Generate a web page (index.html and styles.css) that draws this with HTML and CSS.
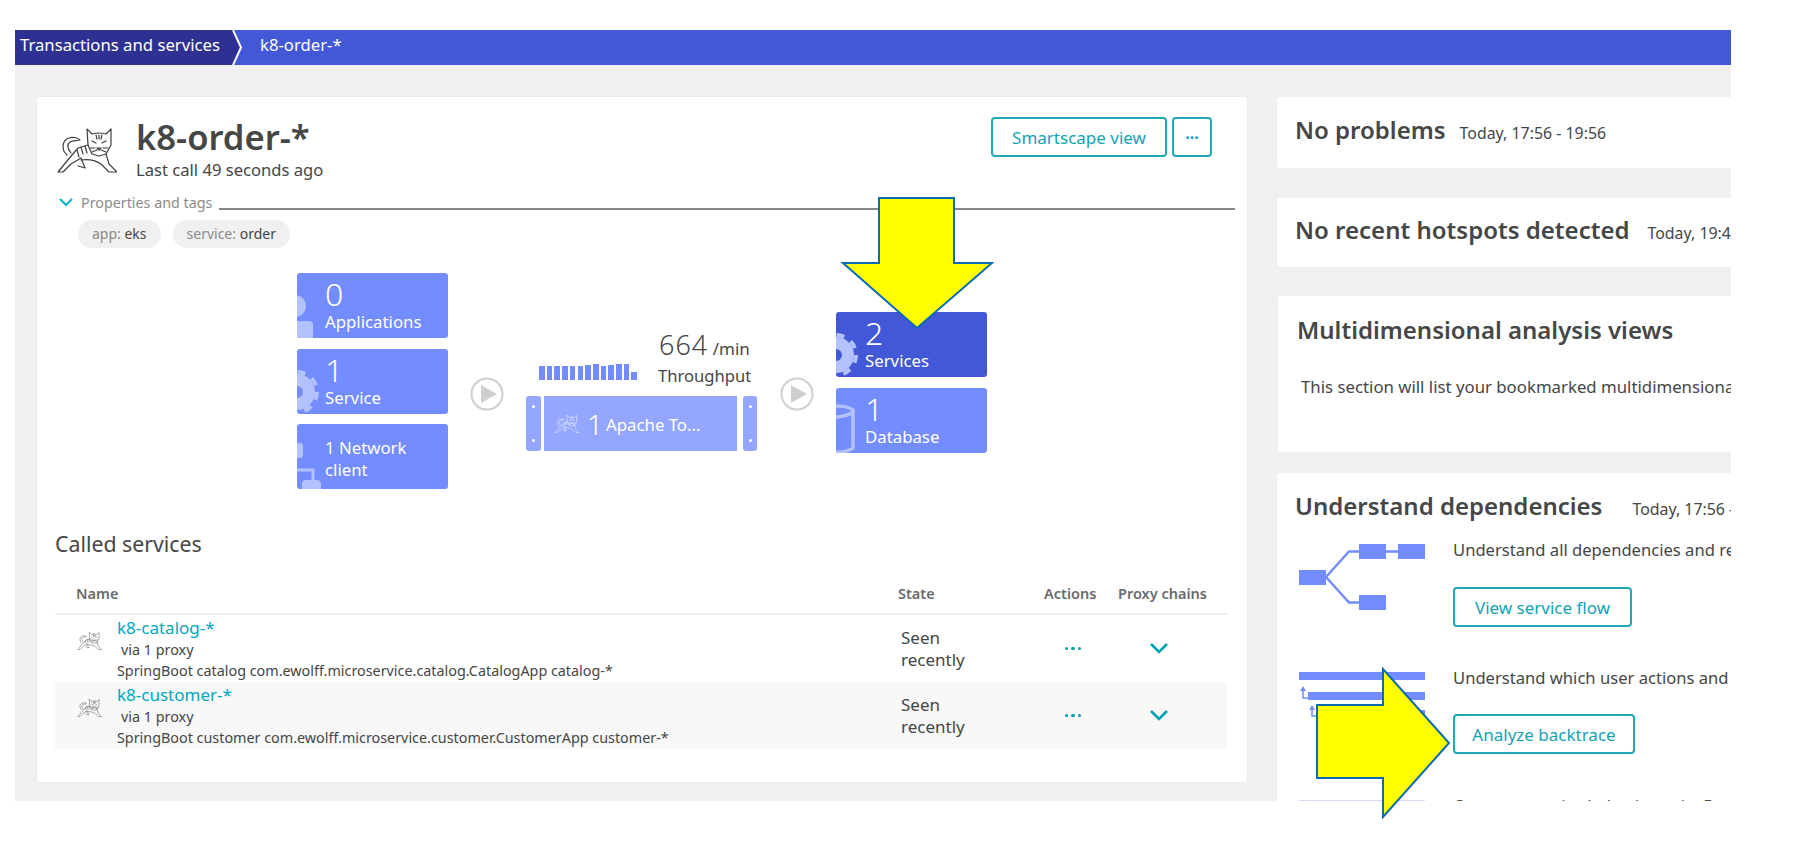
FILE: index.html
```html
<!DOCTYPE html>
<html lang="en">
<head>
<meta charset="utf-8">
<title>k8-order-*</title>
<link rel="stylesheet" href="styles.css">
</head>
<body>
<svg class="defs" width="0" height="0" aria-hidden="true">
  <symbol id="tomcat" viewBox="0 0 60 45">
    <g fill="none" stroke="currentColor" stroke-width="1.2" stroke-linejoin="round" stroke-linecap="round">
      <path d="M30 1L35 6Q42 4 49 6L54 1L54 17L49 26L42 28L35 26L31 17Z"/>
      <path d="M35 13l4 2M49 13l-4 2M40 20h4l-2 2zM42 7v4M39 7l1 4M45 7l-1 4M33 20h5M46 20h5M35 24l5-2M49 24l-5-2"/>
      <path d="M10 27C4 22 5 12 12 10C15 9 21 9 23 12C20 13 16 12 13 14C10 16 10 20 14 25"/>
      <path d="M31 17L21 20L10 33L1 44L6 44L14 36L24 30L28 40L21 38"/>
      <path d="M24 32C31 31 38 32 44 36L52 44L60 44L52 36L49 26"/>
      <path d="M24 19L26 26M28 18L30 25M20 22L22 29"/>
    </g>
  </symbol>
  <symbol id="play" viewBox="0 0 34 34">
    <circle cx="17" cy="17" r="15.5" fill="#fff" stroke="#cfcfcf" stroke-width="2"/>
    <path d="M11 8L27 17L11 26Z" fill="#cfcfcf"/>
  </symbol>
</svg>
<div class="page">
  <div class="shot">
    <nav class="crumbs">
      <span class="crumb-root">Transactions and services</span>
      <svg class="crumb-sep" width="12" height="35" viewBox="0 0 12 35"><path d="M0 0H1L9 17.5L1 35H0Z" fill="#2e3192"/><path d="M1 0L9 17.5L1 35" fill="none" stroke="#fff" stroke-width="2"/></svg>
      <span class="crumb-current">k8-order-*</span>
    </nav>
    <div class="main">
      <section class="card-main">
        <header class="head">
          <svg class="head-icon"><use href="#tomcat"/></svg>
          <div class="head-text">
            <h1>k8-order-*</h1>
            <p>Last call 49 seconds ago</p>
          </div>
          <div class="head-actions">
            <button class="btn btn-smart">Smartscape view</button>
            <button class="btn btn-more">···</button>
          </div>
        </header>
        <div class="props">
          <svg class="props-chevron" width="14" height="9" viewBox="0 0 14 9"><path d="M1 1L7 7L13 1" fill="none" stroke="#00b4cc" stroke-width="2"/></svg>
          <span class="props-label">Properties and tags</span>
          <span class="props-line"></span>
        </div>
        <div class="tags">
          <span class="tag"><i>app:</i> eks</span>
          <span class="tag"><i>service:</i> order</span>
        </div>
        <div class="flow">
          <div class="tile-col">
            <div class="tile">
              <svg class="tile-icon" viewBox="0 0 28 65"><circle cx="-2" cy="33" r="11"/><rect x="-6" y="48" width="22" height="20" rx="4"/></svg>
              <div class="tile-text"><b>0</b><span>Applications</span></div>
            </div>
            <div class="tile">
              <svg class="tile-icon" viewBox="0 0 28 65"><circle class="gear-ring" cx="0" cy="43" r="12"/><circle class="gear-teeth" cx="0" cy="43" r="20"/></svg>
              <div class="tile-text"><b>1</b><span>Service</span></div>
            </div>
            <div class="tile">
              <svg class="tile-icon" viewBox="0 0 28 65"><rect x="-6" y="19" width="12" height="15" rx="3"/><path class="net-line" d="M0 46H16V58"/><rect x="5" y="56" width="19" height="14" rx="4"/></svg>
              <div class="tile-text tile-two"><span>1 Network</span><span>client</span></div>
            </div>
          </div>
          <svg class="play"><use href="#play"/></svg>
          <div class="center">
            <div class="metric">
              <div class="bars">
                <i style="height:14px"></i><i style="height:14px"></i><i style="height:14px"></i><i style="height:14px"></i><i style="height:14px"></i><i style="height:14px"></i><i style="height:15px"></i><i style="height:16px"></i><i style="height:14px"></i><i style="height:15px"></i><i style="height:16px"></i><i style="height:16px"></i><i style="height:8px"></i>
              </div>
              <div class="metric-text">
                <div class="metric-value"><b>664</b> /min</div>
                <div class="metric-label">Throughput</div>
              </div>
            </div>
            <div class="proc">
              <div class="proc-cap"><i></i><i></i></div>
              <div class="proc-body">
                <svg class="proc-icon"><use href="#tomcat"/></svg>
                <b>1</b><span>Apache To...</span>
              </div>
              <div class="proc-cap"><i></i><i></i></div>
            </div>
          </div>
          <svg class="play play-b"><use href="#play"/></svg>
          <div class="tile-col tile-col-b">
            <div class="tile tile-dark">
              <svg class="tile-icon" viewBox="0 0 28 65"><circle class="gear-ring" cx="0" cy="43" r="12"/><circle class="gear-teeth" cx="0" cy="43" r="20"/></svg>
              <div class="tile-text"><b>2</b><span>Services</span></div>
            </div>
            <div class="tile">
              <svg class="tile-icon" viewBox="0 0 28 65"><path class="db-line" d="M-12 21C-2 17 10 17 17 22V60C10 65 -2 65 -12 64M-12 28C-2 30 10 29 17 24"/></svg>
              <div class="tile-text"><b>1</b><span>Database</span></div>
            </div>
          </div>
        </div>
        <h2 class="called">Called services</h2>
        <div class="table">
          <div class="row-head">
            <span class="c-name">Name</span>
            <span class="c-state">State</span>
            <span class="c-actions">Actions</span>
            <span class="c-proxy">Proxy chains</span>
          </div>
          <div class="row-item">
            <svg class="row-icon"><use href="#tomcat"/></svg>
            <div class="row-text">
              <a class="link">k8-catalog-*</a>
              <span class="via">via 1 proxy</span>
              <span>SpringBoot catalog com.ewolff.microservice.catalog.CatalogApp catalog-*</span>
            </div>
            <div class="state">Seen<br>recently</div>
            <div class="dots"><i></i><i></i><i></i></div>
            <svg class="row-chevron" width="18" height="11" viewBox="0 0 18 11"><path d="M1 1L9 9L17 1" fill="none" stroke="#00a1b2" stroke-width="2.6"/></svg>
          </div>
          <div class="row-item row-alt">
            <svg class="row-icon"><use href="#tomcat"/></svg>
            <div class="row-text">
              <a class="link">k8-customer-*</a>
              <span class="via">via 1 proxy</span>
              <span>SpringBoot customer com.ewolff.microservice.customer.CustomerApp customer-*</span>
            </div>
            <div class="state">Seen<br>recently</div>
            <div class="dots"><i></i><i></i><i></i></div>
            <svg class="row-chevron" width="18" height="11" viewBox="0 0 18 11"><path d="M1 1L9 9L17 1" fill="none" stroke="#00a1b2" stroke-width="2.6"/></svg>
          </div>
        </div>
      </section>
      <aside class="side">
        <section class="panel panel-a">
          <h3>No problems</h3><span class="when">Today, 17:56 - 19:56</span>
        </section>
        <section class="panel panel-b">
          <h3>No recent hotspots detected</h3><span class="when when-wide">Today, 19:41 - 19:56</span>
        </section>
        <section class="panel panel-c">
          <h3>Multidimensional analysis views</h3>
          <p>This section will list your bookmarked multidimensional analysis views.</p>
        </section>
        <section class="panel panel-d">
          <div class="panel-title"><h3>Understand dependencies</h3><span class="when when-dep">Today, 17:56 - 19:56</span></div>
          <div class="dep">
            <svg class="dep-img" width="126" height="66" viewBox="0 0 126 66">
              <g fill="#738cff"><rect x="0" y="26" width="27" height="15"/><rect x="60" y="0" width="27" height="15"/><rect x="99" y="0" width="27" height="15"/><rect x="60" y="51" width="27" height="15"/></g>
              <path d="M27 33L50 7.500H99M27 33L50 58.500H60" fill="none" stroke="#738cff" stroke-width="2.500"/>
            </svg>
            <div class="dep-body">
              <p>Understand all dependencies and requests of this service</p>
              <button class="btn btn-flow">View service flow</button>
            </div>
          </div>
          <div class="dep">
            <svg class="dep-img" width="126" height="48" viewBox="0 0 126 48">
              <g fill="#738cff"><rect x="0" y="0" width="126" height="8"/><rect x="9" y="20" width="117" height="8"/><rect x="18" y="38" width="108" height="8"/></g>
              <path d="M4 17V26H9M13 36V44H18" fill="none" stroke="#738cff" stroke-width="1.500"/>
              <path d="M1 19L4 14L7 19ZM10 38L13 33L16 38Z" fill="#738cff"/>
            </svg>
            <div class="dep-body">
              <p>Understand which user actions and services call this service</p>
              <button class="btn btn-back">Analyze backtrace</button>
            </div>
          </div>
          <div class="dep">
            <svg class="dep-img" width="126" height="6" viewBox="0 0 126 6"><rect width="126" height="6" fill="#d5dcff"/></svg>
            <div class="dep-body"><p>Compare service behavior to its DevOps baseline</p></div>
          </div>
        </section>
      </aside>
    </div>
  </div>
  <svg class="arrow arrow-down" width="154" height="134" viewBox="0 0 154 134">
    <path d="M39 1H114V66H152L77 131L3 66H39Z" fill="#ffff00" stroke="#0a6ab4" stroke-width="2"/>
  </svg>
  <svg class="arrow arrow-right" width="136" height="152" viewBox="0 0 136 152">
    <path d="M2 38H68V2L134 76L68 150V111H2Z" fill="#ffff00" stroke="#0a6ab4" stroke-width="2"/>
  </svg>
</div>
</body>
</html>
```

FILE: styles.css
```css
* { box-sizing: border-box; }
html, body { margin: 0; padding: 0; background: #fff; overflow: hidden; }
body { font-family: "Noto Sans", "Open Sans", sans-serif; color: #454646; font-size: 14px; }
h1, h2, h3, p { margin: 0; }
.defs { position: absolute; }

.page { position: relative; width: 1799px; height: 852px; padding: 30px 0 0 15px; }
.shot { width: 1716px; height: 771px; overflow: hidden; background: #f0f0f0; }

.crumbs { height: 35px; background: #4358d6; display: flex; color: #fff; font-size: 16.700px; line-height: 29px; }
.crumb-root { width: 217px; padding-left: 5px; background: #2e3192; white-space: nowrap; }
.crumb-sep { flex: none; }
.crumb-current { margin-left: 16px; }

.main { display: flex; gap: 30px; padding: 32px 0 0 22px; }
.card-main { flex: none; width: 1210px; height: 685px; background: #fff; border-radius: 3px; box-shadow: 0 0 2px rgba(0,0,0,.08); padding: 20px 20px 0 18px; }

.head { display: flex; align-items: flex-start; }
.head-icon { width: 60px; height: 45px; margin: 11px 19px 0 2px; color: #3f3f3f; flex: none; }
.head-text { flex: 1; }
.head-text h1 { font-size: 34.600px; font-weight: 600; line-height: 40px; color: #454646; margin-top: 0; }
.head-text p { font-size: 16.600px; line-height: 22px; color: #454646; margin-top: 2px; }
.head-actions { display: flex; gap: 5px; margin-right: 15px; }

.btn { height: 40px; border: 2px solid #1fa8b6; border-radius: 4px; background: #fff; color: #12a3b3; font: inherit; font-size: 17px; padding: 0; }
.btn-smart { width: 176px; }
.btn-more { width: 40px; font-weight: 700; line-height: 30px; font-size: 16px; }
.btn-flow { width: 179px; }
.btn-back { width: 182px; margin-top: -1px; }

.props { display: flex; align-items: center; height: 22px; margin: 10px -8px 0 0; padding-left: 4px; }
.props-chevron { flex: none; }
.props-label { color: #8b8b8b; font-size: 14.300px; margin-left: 8px; white-space: nowrap; }
.props-line { flex: 1; height: 2px; background: #888; margin: 13px 0 0 7px; }
.tags { display: flex; gap: 12px; margin: 7px 0 0 23px; }
.tag { display: block; height: 28px; line-height: 27px; padding: 0 14px; border-radius: 14px; background: #f0f0f0; font-size: 14px; color: #454646; }
.tag i { font-style: normal; color: #8b8b8b; }

.flow { display: flex; align-items: flex-start; margin: 25px 0 0 242px; height: 216px; }
.tile-col { display: flex; flex-direction: column; gap: 10.500px; width: 151px; flex: none; }
.tile-col-b { margin-top: 39px; }
.tile { display: flex; width: 151px; height: 65px; border-radius: 3px; background: #738cff; color: #fff; overflow: hidden; }
.tile-dark { background: #4358d6; }
.tile-icon { width: 28px; height: 65px; flex: none; fill: #b4c1ff; overflow: hidden; }
.gear-ring { fill: none; stroke: #b4c1ff; stroke-width: 12; }
.gear-teeth { fill: none; stroke: #b4c1ff; stroke-width: 4; stroke-dasharray: 8 7.700; }
.net-line { fill: none; stroke: #b4c1ff; stroke-width: 3; }
.db-line { fill: none; stroke: #b4c1ff; stroke-width: 3.500; }
.tile-text { display: flex; flex-direction: column; padding-top: 4px; }
.tile-text b { font-size: 32px; line-height: 34px; font-weight: 300; }
.tile-text span { font-size: 16.800px; line-height: 22px; }
.tile-two { padding-top: 13px; }
.tile-col-b .tile-text { padding-left: 1px; }

.play { width: 34px; height: 34px; flex: none; margin: 104px 22px 0; }
.play-b { margin-left: 23px; }
.center { flex: none; width: 231px; display: flex; flex-direction: column; padding-top: 58px; }
.metric { display: flex; align-items: flex-end; height: 65px; padding: 0 8px 0 13px; }
.bars { display: flex; align-items: flex-end; gap: 2.100px; width: 98px; height: 16px; margin: 0 22px 16px 0; flex: none; }
.bars i { display: block; flex: 1; background: #738cff; }
.metric-text { white-space: nowrap; margin-bottom: 9px; }
.metric-value { font-size: 17px; line-height: 32px; }
.metric-value b { font-weight: 300; font-size: 27px; letter-spacing: 1px; }
.metric-label { font-size: 16.600px; line-height: 22px; margin-left: -1px; }
.proc { display: flex; gap: 3px; height: 55px; }
.proc-cap { width: 15px; flex: none; background: #94a6ff; border-radius: 3px; display: flex; flex-direction: column; align-items: center; justify-content: space-between; padding: 9px 0; }
.proc-cap:last-child { width: 14px; margin-left: 3px; }
.proc-cap i { display: block; width: 3px; height: 3px; border-radius: 50%; background: #fff; }
.proc-body { flex: 1; background: #94a6ff; color: #fff; display: flex; align-items: center; padding-left: 11px; white-space: nowrap; }
.proc-icon { width: 24px; height: 18px; margin-right: 8px; color: #fff; flex: none; }
.proc-body b { font-size: 28px; font-weight: 300; margin-right: 3px; }
.proc-body span { font-size: 16.800px; margin-top: 2px; }

.called { font-size: 21.300px; font-weight: 400; line-height: 28px; margin-top: 41px; color: #454646; }

.table { margin-top: 22px; }
.row-head { display: grid; grid-template-columns: 843px 146px 74px 1fr; height: 35px; border-bottom: 2px solid #f0f0f0; color: #6b6b6b; font-size: 14.500px; font-weight: 600; line-height: 18px; padding-top: 4px; }
.c-name { padding-left: 21px; }
.c-proxy { white-space: nowrap; }
.row-item { display: grid; grid-template-columns: 62px 784px 163.500px 85px 1fr; align-items: center; height: 67px; }
.row-alt { background: #f8f8f8; }
.row-icon { width: 25px; height: 18px; color: #4d4d4d; margin: -16px 0 0 22px; overflow: visible; }
.row-text { display: flex; flex-direction: column; white-space: nowrap; font-size: 14.350px; line-height: 21px; }
.link { color: #00a8bf; font-size: 17px; line-height: 22px; }
.via { padding-left: 4px; }
.state { font-size: 17px; line-height: 22px; color: #454646; }
.dots { display: flex; gap: 3px; }
.dots i { display: block; width: 3.500px; height: 3.500px; border-radius: 50%; background: #00a1b2; flex: none; }

.side { flex: none; width: 520px; display: flex; flex-direction: column; }
.panel { background: #fff; border-radius: 3px; padding-left: 18px; white-space: nowrap; overflow: hidden; }
.panel h3 { font-size: 24px; font-weight: 600; line-height: 30px; color: #454646; display: inline-block; }
.when { font-size: 15.900px; color: #454646; margin-left: 14px; }
.when-wide { margin-left: 18px; }
.when-dep { margin-left: 30px; }
.panel-a { height: 71px; padding-top: 18px; margin-bottom: 30px; }
.panel-b { height: 69px; padding-top: 17px; margin-bottom: 29px; }
.panel-c { height: 156px; padding: 19px 0 0 19px; margin: 0 0 21px 1px; }
.panel-c p { font-size: 16.800px; line-height: 22px; margin: 31px 0 0 4px; }
.panel-d { padding-top: 18px; height: 360px; }
.panel-title { margin-bottom: 18px; }
.dep { display: flex; height: 128px; padding-left: 4px; }
.dep-img { flex: none; margin: 5px 28px 0 0; }
.dep-body p { font-size: 16.600px; line-height: 22px; margin-bottom: 26px; }

.arrow { position: absolute; }
.arrow-down { left: 840px; top: 197px; }
.arrow-right { left: 1315px; top: 667px; }
```
